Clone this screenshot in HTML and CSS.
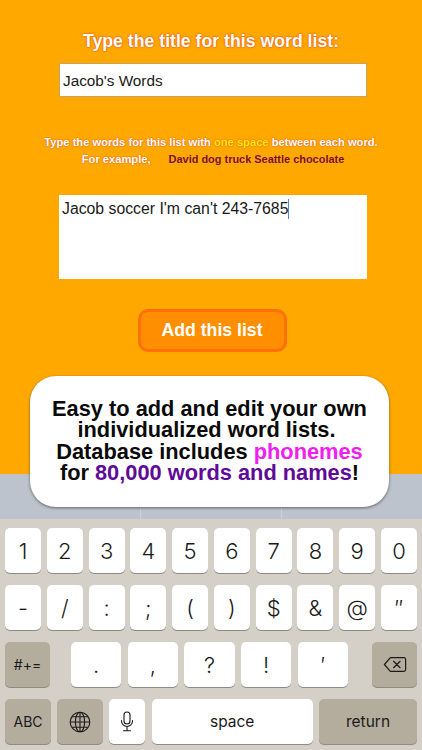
FILE: index.html
```html
<!DOCTYPE html>
<html lang="en">
<head>
<meta charset="utf-8">
<title>Add word list</title>
<link rel="stylesheet" href="styles.css">
</head>
<body>
<div class="screen">
  <main class="form">
    <h1 class="title">Type the title for this word list:</h1>
    <div class="field field-title">Jacob's Words</div>
    <p class="hint">
      <span class="hint-line">Type the words for this list with <span class="yellow">one space</span> between each word.</span>
      <span class="hint-line hint-example"><span>For example,</span><span class="maroon">David dog truck Seattle chocolate</span></span>
    </p>
    <div class="field field-words"><span>Jacob soccer I'm can't 243-7685</span><span class="caret"></span></div>
    <button class="add" type="button">Add this list</button>
  </main>
  <div class="predict"><i></i><i></i></div>
  <section class="keyboard">
    <div class="row">
      <div class="key">1</div><div class="key">2</div><div class="key">3</div><div class="key">4</div><div class="key">5</div>
      <div class="key">6</div><div class="key">7</div><div class="key">8</div><div class="key">9</div><div class="key">0</div>
    </div>
    <div class="row">
      <div class="key">-</div><div class="key">/</div><div class="key">:</div><div class="key">;</div><div class="key">(</div>
      <div class="key">)</div><div class="key">$</div><div class="key">&amp;</div><div class="key">@</div><div class="key">″</div>
    </div>
    <div class="row row-3">
      <div class="key dark small w45">#+=</div>
      <div class="punct">
        <div class="key">.</div><div class="key">,</div><div class="key">?</div><div class="key">!</div><div class="key">′</div>
      </div>
      <div class="key dark w45">
        <svg class="icon" width="24" height="17" viewBox="0 0 26 18" fill="none" stroke="#1a1a1a" stroke-width="1.3" stroke-linejoin="round" stroke-linecap="round">
          <path d="M8 1.5H22.5a2 2 0 0 1 2 2V14.500a2 2 0 0 1-2 2H8L1.500 9Z"/>
          <path d="M11.500 5.500L18.500 12.500M18.500 5.500L11.500 12.500"/>
        </svg>
      </div>
    </div>
    <div class="row row-4">
      <div class="key dark small w46">ABC</div>
      <div class="key dark w46">
        <svg class="icon" width="22" height="22" viewBox="0 0 22 22" fill="none" stroke="#1a1a1a" stroke-width="1.1">
          <circle cx="11" cy="11" r="9.800"/>
          <ellipse cx="11" cy="11" rx="4.600" ry="9.800"/>
          <path d="M11 1.200V20.800M1.200 11H20.800M2.800 5.800H19.200M2.800 16.200H19.200"/>
        </svg>
      </div>
      <div class="key w36">
        <svg class="icon" width="14" height="21" viewBox="0 0 14 21" fill="none" stroke="#1a1a1a" stroke-width="1.1" stroke-linecap="round">
          <rect x="4" y="1" width="6" height="12" rx="3"/>
          <path d="M1.500 9.500V10a5.500 5.500 0 0 0 11 0V9.500M7 15.500V19.500M3.500 19.800H10.500"/>
        </svg>
      </div>
      <div class="key grow label">space</div>
      <div class="key dark w98 label">return</div>
    </div>
  </section>
  <aside class="bubble">
    <p>Easy to add and edit your own<br><span class="offset">individualized word lists.</span><br>Database includes <span class="pink">phonemes</span><br>for <span class="purple">80,000 words and names</span>!</p>
  </aside>
</div>
</body>
</html>
```
FILE: styles.css
```css
* { box-sizing: border-box; }
html, body { margin: 0; padding: 0; }
body { width: 422px; height: 750px; overflow: hidden; font-family: "Liberation Sans", Arial, sans-serif; }
.screen { position: relative; width: 422px; height: 750px; display: flex; flex-direction: column; background: #d4d0c8; }

.form { height: 474px; background: #ffa800; display: flex; flex-direction: column; align-items: center; padding-top: 30px; }
.title {
  margin: 0; color: #fff; font-size: 17.700px; line-height: 22px; font-weight: 700;
  text-shadow: 0 0 1.500px #f0601c, 0 0 1.500px #f0601c, 0 0 1.500px #f0601c;
}
.field { background: #fff; width: 308px; margin-left: 4px; color: #1a1a1a; font-family: "Liberation Sans", Arial, sans-serif; }
.field-title { margin-top: 11px; height: 34px; line-height: 33px; padding-left: 3px; border: 1px solid #c9a25e; font-size: 15.300px; }
.hint { margin: 37px 0 0; width: 100%; text-align: center; color: #fff; font-size: 11.170px; font-weight: 700; }
.hint-line { display: block; line-height: 16.500px; text-shadow: 0 0 1.500px #f0601c, 0 0 1.500px #f0601c; }
.yellow { color: #ffee00; }
.hint-example { display: flex; justify-content: center; gap: 18px; padding-left: 4px; }
.maroon { color: #7a1030; text-shadow: none; font-size: 10.950px; }
.field-words { margin-top: 28px; height: 84px; padding: 5px 3px; line-height: 17px; display: flex; align-items: flex-start; font-size: 15.800px; }
.caret { width: 1px; height: 20px; background: #5b7fd6; margin-top: -1px; }
.add {
  margin-top: 30px; margin-left: 2px; width: 149px; height: 43px; padding: 0;
  background: #ff8f00; border: 3px solid #ff6f0a; border-radius: 10px;
  color: #fff; font: 700 17.700px "Liberation Sans", Arial, sans-serif;
}

.predict { height: 45px; background: #bcc3cc; display: flex; justify-content: center; align-items: flex-end; gap: 140px; }
.predict i { display: block; width: 1px; height: 12px; background: #cdd2d8; }

.keyboard { flex: 1; background: #d4d0c8; padding: 9px 5px 0; display: flex; flex-direction: column; gap: 12px; }
.row { display: flex; gap: 5.700px; height: 45px; }
.key {
  flex: 1 1 0; display: flex; align-items: center; justify-content: center;
  background: #fff; border-radius: 5px; box-shadow: 0 1px 0 #8e8b84;
  color: #1a1a1a; font-family: Inter, "Liberation Sans", sans-serif; font-size: 22px; font-weight: 300;
}
.dark { background: #b4ad9e; }
.small { font-size: 14px; font-weight: 400; }
.label { font-size: 15.500px; font-weight: 400; }
.w45 { flex: 0 0 45px; }
.w46 { flex: 0 0 46px; }
.w36 { flex: 0 0 36px; }
.w98 { flex: 0 0 98px; }
.grow { flex: 1 1 0; }
.row-3 { justify-content: space-between; }
.punct { display: flex; gap: 6.500px; width: 277px; margin-right: 3px; }
.row-4 { gap: 6.200px; }
.icon { display: block; }

.bubble {
  position: absolute; left: 30px; top: 376px; width: 359px; height: 131px; padding-bottom: 2px;
  background: #fff; border-radius: 26px; box-shadow: 0 1px 3px rgba(60, 60, 60, .7);
  display: flex; align-items: center; justify-content: center;
}
.bubble p { margin: 0; text-align: center; color: #0a0a0a; font-size: 21.800px; line-height: 21.500px; font-weight: 700; }
.offset { padding-right: 6px; }
.pink { color: #f020f0; }
.purple { color: #5f0a98; }
```
